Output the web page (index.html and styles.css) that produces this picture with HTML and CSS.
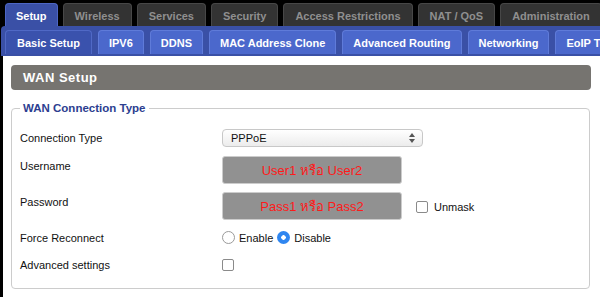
FILE: index.html
```html
<!DOCTYPE html>
<html lang="en">
<head>
    <meta charset="UTF-8">
    <title>Basic Setup</title>
    <link rel="stylesheet" href="styles.css">
</head>
<body>
    <!-- Onglets principaux -->
    <nav class="main-tabs">
        <a class="tab active" href="#">Setup</a>
        <a class="tab" href="#">Wireless</a>
        <a class="tab" href="#">Services</a>
        <a class="tab" href="#">Security</a>
        <a class="tab" href="#">Access Restrictions</a>
        <a class="tab" href="#">NAT / QoS</a>
        <a class="tab" href="#">Administration</a>
    </nav>

    <nav class="sub-tabs">
        <a class="sub active" href="#">Basic Setup</a>
        <a class="sub" href="#">IPV6</a>
        <a class="sub" href="#">DDNS</a>
        <a class="sub" href="#">MAC Address Clone</a>
        <a class="sub" href="#">Advanced Routing</a>
        <a class="sub" href="#">Networking</a>
        <a class="sub" href="#">EoIP Tunnel</a>
    </nav>

    <div class="content">
        <h2 class="section-title">WAN Setup</h2>

        <fieldset class="wan-box">
            <legend>WAN Connection Type</legend>

            <div class="row first">
                <label>Connection Type</label>
                <div class="select">
                    <span>PPPoE</span>
                    <svg width="6" height="10" viewBox="0 0 6 10"><path d="M3 0L6 4H0z M3 10L0 6H6z" fill="#555"/></svg>
                </div>
            </div>

            <div class="row tall">
                <label>Username</label>
                <div class="text-field">User1 หรือ User2</div>
            </div>

            <div class="row tall">
                <label>Password</label>
                <div class="text-field">Pass1 หรือ Pass2</div>
                <span class="check-label"><span class="checkbox"></span>Unmask</span>
            </div>

            <div class="row">
                <label>Force Reconnect</label>
                <span class="radio"></span><span class="opt">Enable</span>
                <span class="radio on"></span><span class="opt">Disable</span>
            </div>

            <div class="row">
                <label>Advanced settings</label>
                <span class="checkbox"></span>
            </div>
        </fieldset>
    </div>
</body>
</html>
```

FILE: styles.css
```css
body {
    margin: 0;
    background: #000;
    font-family: "Liberation Sans", Arial, sans-serif;
    height: 297px;
    overflow: hidden;
}

a {
    text-decoration: none;
}

.main-tabs {
    display: flex;
    gap: 5px;
    padding: 3px 0 0 5px;
    white-space: nowrap;
}

.main-tabs .tab {
    height: 23px;
    line-height: 24px;
    padding: 0 11px;
    font-size: 11px;
    font-weight: bold;
    color: #8f8f8f;
    background: #333;
    border: 1px solid #474747;
    border-bottom: none;
    border-radius: 4px 4px 0 0;
    box-sizing: border-box;
}

.main-tabs .tab.active {
    padding: 0 10px;
    background: #3a50a6;
    border-color: #4d66c4;
    color: #fff;
}

.sub-tabs {
    display: flex;
    gap: 6px;
    margin-left: 1px;
    padding: 4px 0 2px 4px;
    background: #3a50a6;
    border-radius: 4px 0 0 0;
    white-space: nowrap;
    overflow: hidden;
}

.sub-tabs .sub {
    flex-shrink: 0;
    height: 24px;
    line-height: 25px;
    padding: 0 10px;
    font-size: 11px;
    font-weight: bold;
    color: #fff;
    background: #4b68cc;
    border: 1px solid #5f7bd9;
    border-bottom: none;
    border-radius: 4px 4px 0 0;
    box-sizing: border-box;
}

.sub-tabs .sub.active {
    padding: 0 11px;
    background: #3a52ad;
    border-color: #5069c6;
}

.content {
    margin-left: 3px;
    background: #fff;
    padding: 9px 9px 0 8px;
    height: 241px;
    box-sizing: border-box;
}

.section-title {
    margin: 0;
    height: 25px;
    line-height: 25px;
    padding-left: 12px;
    background: #767470;
    color: #fff;
    font-size: 13px;
    letter-spacing: 0.5px;
    border-radius: 4px;
}

.wan-box {
    margin: 11px 1px 0 0;
    padding: 9px 8px 10px 8px;
    border: 1px solid #ccc;
    border-radius: 4px;
    font-size: 11px;
    color: #111;
}

.wan-box legend {
    padding: 0 4px 0 3px;
    font-weight: bold;
    font-size: 11.5px;
    line-height: 14px;
    color: #2c3e90;
}

.row {
    display: flex;
    align-items: center;
    height: 27px;
}

.row.first {
    height: 28px;
}

.row.tall {
    height: 36px;
}

.row label {
    width: 202px;
    flex-shrink: 0;
}

.row.tall label {
    margin-bottom: 8px;
}

.select {
    width: 201px;
    height: 18px;
    box-sizing: border-box;
    display: flex;
    align-items: center;
    justify-content: space-between;
    padding: 0 7px 0 8px;
    border: 1px solid #c8c8c8;
    border-radius: 4px;
    background: linear-gradient(#fff, #ececec);
}

.text-field {
    width: 180px;
    height: 28px;
    line-height: 28px;
    box-sizing: border-box;
    border: 1px solid #ccc;
    border-radius: 3px;
    background: #919191;
    color: #ff1a1a;
    font-size: 13px;
    text-align: center;
}

.check-label {
    display: flex;
    align-items: center;
    margin: 1px 0 0 14px;
}

.checkbox {
    display: inline-block;
    width: 10px;
    height: 10px;
    border: 1px solid #8a8a8a;
    border-radius: 2px;
    background: #fff;
    margin-right: 6px;
}

.radio {
    width: 11px;
    height: 11px;
    border: 1px solid #9a9a9a;
    border-radius: 50%;
    margin-right: 4px;
    background: #fff;
}

.radio.on {
    width: 13px;
    height: 13px;
    border: none;
    background: radial-gradient(circle, #fff 0 2px, #2f86f0 2.5px);
}

.opt {
    margin-right: 4px;
}
```
